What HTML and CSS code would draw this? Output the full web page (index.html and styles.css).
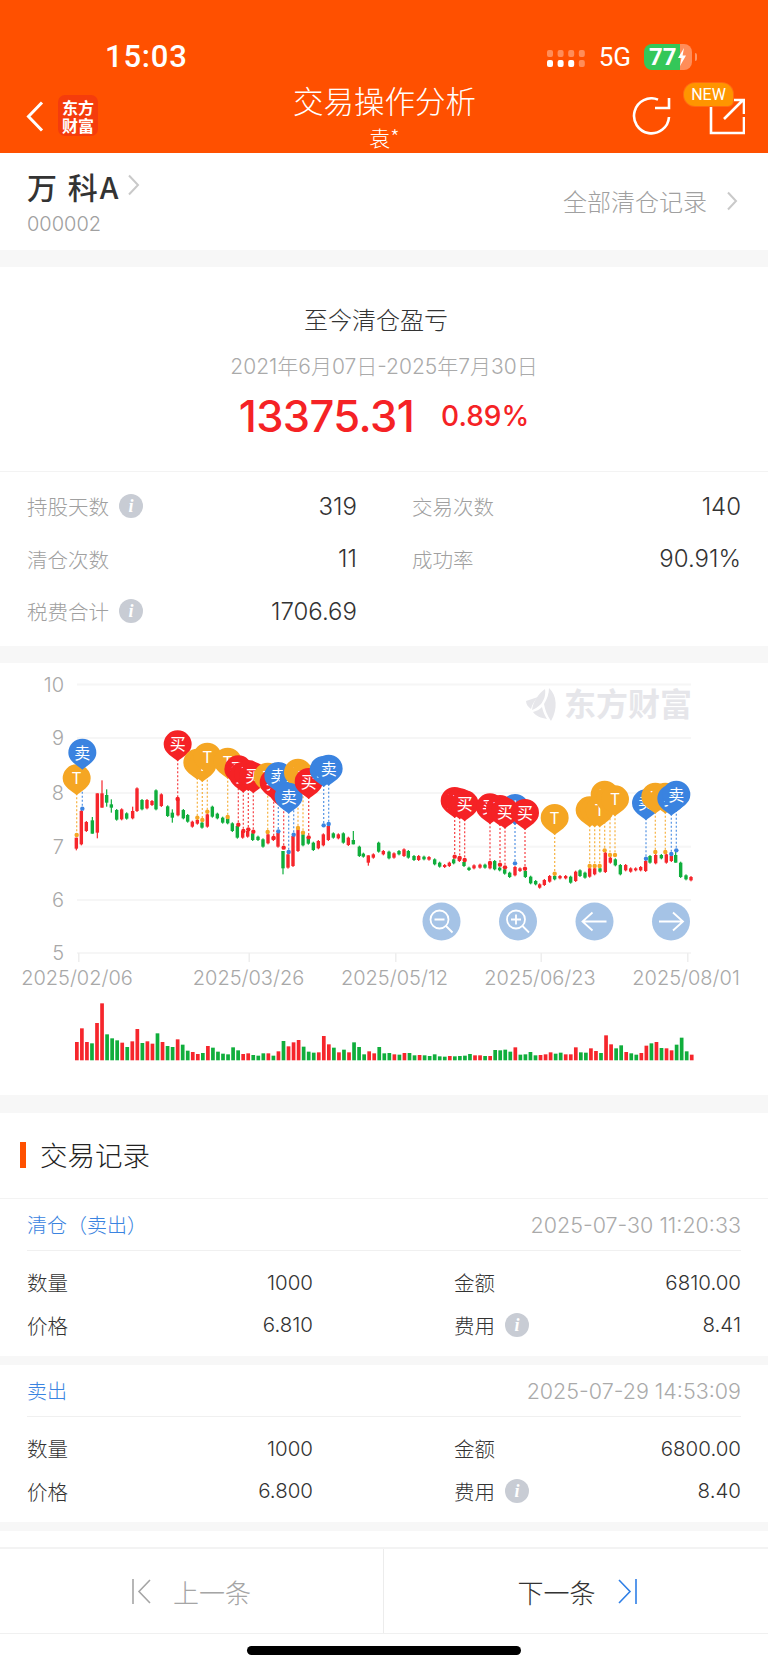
FILE: index.html
```html
<!DOCTYPE html>
<html lang="zh">
<head>
<meta charset="utf-8">
<title>交易操作分析</title>
<link rel="stylesheet" href="styles.css">
</head>
<body>
<div class="page">
  <header class="header">
    <div class="status">
      <span class="time">15:03</span>
      <span class="status-right">
        <svg class="signal" width="38" height="17" viewBox="0 0 38 17">
          <g fill="#fff" opacity=".35"><rect x="0" y="0" width="6" height="7" rx="2"/><rect x="10.6" y="0" width="6" height="7" rx="2"/><rect x="21.2" y="0" width="6" height="7" rx="2"/><rect x="31.8" y="0" width="6" height="7" rx="2"/><rect x="31.8" y="10" width="6" height="7" rx="2"/></g>
          <g fill="#fff"><rect x="0" y="10" width="6" height="7" rx="2"/><rect x="10.6" y="10" width="6" height="7" rx="2"/><rect x="21.2" y="10" width="6" height="7" rx="2"/></g>
        </svg>
        <span class="net">5G</span>
        <span class="battery"><span class="batt-num">77</span>
          <svg class="bolt" width="10" height="18" viewBox="0 0 10 18"><path d="M7 0 1 10h3.4L3 18l6-10.500H5.600z" fill="#fff"/></svg>
        </span>
      </span>
    </div>
    <nav class="nav">
      <div class="nav-left">
        <svg class="back" width="18" height="31" viewBox="0 0 18 31"><path d="M16 1.500 2.500 15.500 16 29.500" fill="none" stroke="#fff" stroke-width="3"/></svg>
        <div class="logo"><span>东方</span><span>财富</span></div>
      </div>
      <div class="nav-title">
        <div class="title">交易操作分析</div>
        <div class="subtitle">袁*</div>
      </div>
      <div class="nav-right">
        <svg class="refresh" width="40" height="38" viewBox="0 0 40 38"><path d="M26 2.600A17.500 17.500 0 1 0 37 20" fill="none" stroke="#fff" stroke-width="2.600"/><path d="M37 1v10H23" fill="none" stroke="#fff" stroke-width="2.600"/></svg>
        <span class="share">
          <svg width="36" height="38" viewBox="0 0 36 38"><path d="M2 8V36H35V20M15 22 34 3M21 3H35V17" fill="none" stroke="#fff" stroke-width="2.600"/></svg>
          <span class="new">NEW</span>
        </span>
      </div>
    </nav>
  </header>

  <section class="stock">
    <div>
      <div class="stock-name">万 科A<svg class="chev-a" width="13" height="22" viewBox="0 0 13 22"><path d="M2 1.500 11 11 2 20.500" fill="none" stroke="#c9c9c9" stroke-width="2"/></svg></div>
      <div class="stock-code">000002</div>
    </div>
    <div class="all-link">全部清仓记录<svg class="chev-b" width="12" height="20" viewBox="0 0 12 20"><path d="M2 1.500 10 10 2 18.500" fill="none" stroke="#c9c9c9" stroke-width="2"/></svg></div>
  </section>

  <section class="summary">
    <div class="sum-title">至今清仓盈亏</div>
    <div class="sum-date">2021年6月07日-2025年7月30日</div>
    <div class="sum-nums"><span class="amount">13375.31</span><span class="pct">0.89%</span></div>
  </section>

  <section class="stats">
    <div class="stat"><span class="lab">持股天数<i class="info">i</i></span><span class="val">319</span></div>
    <div class="stat"><span class="lab">交易次数</span><span class="val">140</span></div>
    <div class="stat"><span class="lab">清仓次数</span><span class="val">11</span></div>
    <div class="stat"><span class="lab">成功率</span><span class="val">90.91%</span></div>
    <div class="stat"><span class="lab">税费合计<i class="info">i</i></span><span class="val">1706.69</span></div>
  </section>

  <section class="chart">
    <svg id="chart" class="chart-svg" width="768" height="432" viewBox="0 662 768 432"></svg>
  </section>

  <section class="records">
    <h2 class="rec-title">交易记录</h2>
    <article class="rec">
      <div class="rec-head"><span class="rec-type">清仓（卖出）</span><span class="rec-time">2025-07-30 11:20:33</span></div>
      <div class="rec-body">
        <div class="kv"><span>数量</span><span>1000</span></div>
        <div class="kv"><span>金额</span><span>6810.00</span></div>
        <div class="kv"><span>价格</span><span>6.810</span></div>
        <div class="kv"><span>费用<i class="info">i</i></span><span>8.41</span></div>
      </div>
    </article>
    <article class="rec">
      <div class="rec-head"><span class="rec-type">卖出</span><span class="rec-time">2025-07-29 14:53:09</span></div>
      <div class="rec-body">
        <div class="kv"><span>数量</span><span>1000</span></div>
        <div class="kv"><span>金额</span><span>6800.00</span></div>
        <div class="kv"><span>价格</span><span>6.800</span></div>
        <div class="kv"><span>费用<i class="info">i</i></span><span>8.40</span></div>
      </div>
    </article>
  </section>

  <div class="band-gap"></div>

  <footer class="pager">
    <div class="pg pg-prev">
      <svg width="19" height="25" viewBox="0 0 19 25"><path d="M1 0V25M18 1 7 12.500 18 24" fill="none" stroke="#a5a5a5" stroke-width="1.600"/></svg>
      <span>上一条</span>
    </div>
    <div class="pg pg-next">
      <span>下一条</span>
      <svg width="19" height="25" viewBox="0 0 19 25"><path d="M18 0V25M1 1 12 12.500 1 24" fill="none" stroke="#2f7fe6" stroke-width="1.600"/></svg>
    </div>
  </footer>
  <div class="home"><span class="home-bar"></span></div>
</div>
<script src="chart.js"></script>
</body>
</html>
```
FILE: styles.css
```css
* { box-sizing: border-box; }
html, body { margin: 0; padding: 0; background: #fff; }
body { font-family: Inter, "Noto Sans CJK SC", sans-serif; color: #333; }
.page { width: 768px; height: 1669px; overflow: hidden; background: #fff; }

.header { height: 153px; background: #ff5000; color: #fff; }
.status { height: 84px; padding: 43px 76px 13px 105px; display: flex; align-items: center; justify-content: space-between; }
.time { font-size: 31px; font-weight: 500; line-height: 28px; font-family: Roboto, sans-serif; letter-spacing: .8px; }
.status-right { display: flex; align-items: center; }
.signal { margin-right: 14px; margin-top: 3px; }
.net { font-size: 26px; line-height: 28px; font-family: Roboto, sans-serif; margin-right: 13px; }
.battery { position: relative; width: 48px; height: 26px; border-radius: 8px; display: flex; align-items: center; padding-left: 5px; background: linear-gradient(90deg, #34c759 75%, rgba(255,255,255,.35) 75%); }
.battery::after { content: ""; position: absolute; left: 51px; top: 9px; width: 2px; height: 8px; border-radius: 0 2px 2px 0; background: rgba(255,255,255,.4); }
.batt-num { font-size: 24px; line-height: 26px; font-weight: 700; font-family: Roboto, sans-serif; }
.bolt { margin-left: 0; flex: none; }

.nav { height: 69px; display: grid; grid-template-columns: 1fr auto 1fr; padding: 0 23px 0 26px; }
.nav-left { display: flex; align-items: flex-start; padding-top: 17px; }
.back { margin-right: 14px; }
.logo { width: 40px; height: 41px; margin-top: -6px; margin-left: 0; border-radius: 7px; background: #f53c0c; font-size: 16px; line-height: 18px; font-weight: 700; font-family: "Noto Sans CJK SC", sans-serif; display: flex; flex-direction: column; align-items: center; justify-content: center; }
.logo span { display: block; }
.nav-title { text-align: center; width: 184px; margin-left: -2px; }
.title { font-size: 30.500px; line-height: 32px; margin-top: 0; font-family: "Noto Sans CJK SC", sans-serif; font-weight: 300; white-space: nowrap; }
.subtitle { font-size: 21px; line-height: 22px; margin-top: 10px; font-family: "Noto Sans CJK SC", sans-serif; font-weight: 300; }
.nav-right { display: flex; justify-content: flex-end; align-items: flex-start; padding-top: 13px; }
.refresh { margin-right: 37px; }
.share { position: relative; display: block; width: 36px; height: 38px; }
.new { position: absolute; left: -25px; top: -14px; width: 49px; height: 23px; background: #ff9500; border-radius: 11px 11px 5px 11px; font-size: 16px; line-height: 23px; text-align: center; font-family: Roboto, sans-serif; box-shadow: 0 0 0 1px #ff6a10; }

.stock { height: 97px; display: flex; justify-content: space-between; align-items: flex-start; padding: 14px 30px 0 27px; }
.stock-name { font-size: 30px; line-height: 38px; font-weight: 500; display: flex; align-items: center; white-space: nowrap; font-family: "Noto Sans CJK SC", sans-serif; color: #333; letter-spacing: 2px; }
.chev-a { margin-left: 7px; margin-top: -3px; }
.stock-code { font-size: 20px; line-height: 24px; color: #a0a0a0; margin-top: 7px; font-weight: 300; }
.all-link { font-size: 24px; line-height: 32px; color: #a0a0a0; display: flex; align-items: center; margin-top: 18px; font-weight: 300; font-family: "Noto Sans CJK SC", sans-serif; }
.chev-b { margin-left: 19px; }

.summary { height: 222px; margin-top: 0; border-top: 17px solid #f7f7f7; border-bottom: 1px solid #f3f3f3; text-align: center; padding-top: 34px; }
.sum-title { font-size: 24px; line-height: 36px; color: #333; font-family: "Noto Sans CJK SC", sans-serif; font-weight: 300; padding-right: 16px; }
.sum-date { font-size: 21px; line-height: 28px; color: #aaa; margin-top: 16px; font-weight: 300; white-space: nowrap; }
.sum-nums { display: flex; justify-content: center; align-items: center; margin-top: 8px; height: 54px; }
.amount { font-size: 43.500px; font-weight: 500; color: #f52225; letter-spacing: -.6px; }
.pct { font-size: 28px; font-weight: 500; color: #f52225; margin-left: 27px; }

.stats { height: 191px; padding: 8px 27px 0 27px; display: grid; grid-template-columns: 330px 329px; column-gap: 55px; grid-auto-rows: 52.500px; border-bottom: 17px solid #f7f7f7; }
.stat { display: flex; justify-content: space-between; align-items: center; }
.lab { font-size: 20.500px; color: #a0a0a0; display: flex; align-items: center; font-family: "Noto Sans CJK SC", sans-serif; font-weight: 300; }
.val { font-size: 24px; color: #333; font-weight: 300; }
.info { display: inline-block; width: 24px; height: 24px; border-radius: 50%; background: #c8ccd4; color: #fff; font: italic 700 18px/24px "Liberation Serif", serif; text-align: center; margin-left: 10px; }

.chart { height: 432px; }
.chart-svg { display: block; }
.tx { font-size: 20px; fill: #a8a8a8; font-weight: 300; }
.mark { font-size: 16px; fill: #fff; font-family: "Noto Sans CJK SC", sans-serif; text-anchor: middle; }
.wm { font-size: 32px; font-weight: 700; fill: #e6e6ea; font-family: "Noto Sans CJK SC", sans-serif; }

.records { border-top: 18px solid #f7f7f7; }
.rec-title { margin: 0; height: 86px; border-bottom: 1px solid #f3f3f3; font-size: 27.500px; line-height: 82px; font-weight: 300; padding-left: 40px; position: relative; font-family: "Noto Sans CJK SC", sans-serif; color: #222; }
.rec-title::before { content: ""; position: absolute; left: 20px; top: 29px; width: 6px; height: 26px; background: #ff5000; }
.rec { border-bottom: 9px solid #f7f7f7; padding: 0 27px 0 27px; height: 166px; }
.rec-head { height: 52px; display: flex; justify-content: space-between; align-items: center; border-bottom: 1px solid #f0f0f0; }
.rec-type { font-size: 20px; color: #3a83e0; font-family: "Noto Sans CJK SC", sans-serif; font-weight: 300; }
.rec-time { font-size: 21.500px; color: #aaa; font-weight: 300; }
.rec-body { display: grid; grid-template-columns: 286px 287px; column-gap: 141px; grid-auto-rows: 42.500px; padding-top: 10px; }
.kv { display: flex; justify-content: space-between; align-items: center; font-size: 20.500px; font-weight: 300; color: #333; }
.kv span:first-child { display: flex; align-items: center; font-family: "Noto Sans CJK SC", sans-serif; font-weight: 300; }

.band-gap { height: 16px; }
.pager { height: 87px; border-top: 2px solid #f3f3f3; border-bottom: 1px solid #f0f0f0; display: flex; }
.pg { width: 50%; display: flex; align-items: center; justify-content: center; font-size: 26px; font-family: "Noto Sans CJK SC", sans-serif; font-weight: 300; }
.pg-prev { color: #a5a5a5; border-right: 1px solid #ececec; }
.pg-prev span { margin-left: 22px; }
.pg-next { color: #333; padding-left: 2px; }
.pg-next svg { margin-left: 22px; }
.home { height: 36px; padding-top: 12px; display: flex; justify-content: center; }
.home-bar { width: 274px; height: 9px; border-radius: 5px; background: #000; }
```
FILE: chart.js
```js
(function () {
  var svg = document.getElementById('chart');
  var R = '#f6262c', G = '#10ae3c', T = '#f5a623', B = '#f52225', S = '#3a83e0';
  var out = '';

  // grid
  [[683.5, '10'], [737, '9'], [792, '8'], [845.7, '7'], [899, '6'], [952, '5']].forEach(function (g) {
    out += '<rect x="77" y="' + (g[0] - 1) + '" width="614" height="2" fill="#f6f6f6"/>';
    out += '<text class="tx" x="64" y="' + (g[0] + 7) + '" text-anchor="end">' + g[1] + '</text>';
  });
  [[78, 77, '2025/02/06'], [248.500, 248.500, '2025/03/26'], [395, 394.500, '2025/05/12'], [540.500, 540, '2025/06/23'], [687, 686, '2025/08/01']].forEach(function (t) {
    out += '<rect x="' + t[0] + '" y="952" width="1.500" height="9" fill="#eee"/>';
    out += '<text class="tx" x="' + t[1] + '" y="984" text-anchor="middle">' + t[2] + '</text>';
  });

  // watermark
  out += '<g fill="#e6e6ea"><path d="M549 687C557 694 558 708 551 720 547 714 545 709 544 703 547 698 549 693 549 687Z"/><path d="M545 688C546 694 544 699 541 703 538 706 535 708 532 709 533 701 538 693 545 688Z"/><path d="M526 700 538 696C534 700 532 704 531 708 528 706 526 703 526 700Z"/><path d="M533 711C537 710 540 708 542 706 543 711 545 715 547 718 541 717 536 715 533 711Z"/></g>';
  out += '<text class="wm" x="564" y="715">东方财富</text>';

  // candles: x, colour, top, bottom, wick top, wick bottom (zoom units, 3 per px)
  var c1 = [[229,R,530,563,530,568],[244,R,450,550],[259,R,483,510],[277,G,478,518,468,518],[292,R,397,515,397,532],[306,R,397,440,358,440],[320,G,402,425,385,437],[334,G,430,440,415,455],[350,G,447,476],[365,R,445,475],[380,G,457,473],[398,R,450,472,437,475],[411,R,382,450],[426,G,417,445],[441,R,417,442],[456,R,420,432],[468,G,388,445],[484,R,400,435],[503,G,436,465],[517,G,455,470,445,485],[534,R,415,463],[550,G,447,472],[563,G,462,482],[577,R,482,497],[592,R,477,488],[606,G,485,500],[622,R,460,497],[637,G,437,467],[652,G,458,472],[668,G,470,485],[683,G,472,487],[697,G,487,510],[712,G,495,530],[728,R,510,530],[743,R,510,527],[758,G,517,537],[774,G,527,537],[789,G,535,557],[804,R,520,547],[820,R,527,537],[834,R,515,557],[849,G,570,622,570,640],[864,R,580,620],[879,R,525,615],[894,R,505,570],[909,G,520,553],[925,G,530,548],[940,G,545,567],[955,R,540,562],[970,R,520,553],[985,R,495,537],[1000,G,517,530],[1015,R,520,532],[1030,G,517,545],[1045,R,530,552],[1060,G,537,550,510,550],[1078,G,557,585],[1090,G,578,587],[1105,R,583,605,583,614],[1120,R,580,590],[1136,G,545,572],[1150,R,570,580]];
  var c2 = [[15,G,572,592],[30,R,577,590],[45,G,570,580],[60,R,565,585],[73,G,570,590],[90,G,585,597],[104,R,585,597],[120,G,587,595],[135,R,588,596],[152,G,595,610],[167,G,605,617],[182,R,612,618],[196,R,605,615],[209,G,595,607],[226,R,590,600],[240,G,603,615],[255,G,620,627],[270,R,613,622],[288,R,611,620],[303,G,611,620],[318,R,605,622],[332,G,600,625],[347,G,620,628],[362,G,625,638],[377,G,635,648],[393,R,618,643],[408,R,622,630],[424,G,630,648],[440,G,647,667],[455,G,660,670],[467,R,670,680],[481,R,657,672],[497,R,645,662],[512,G,645,655],[528,R,645,652],[545,R,645,652],[560,G,647,665],[575,R,632,660],[588,G,628,645],[603,G,635,650],[617,R,622,647],[632,R,622,640],[648,G,622,632],[664,R,575,633],[679,R,590,605],[694,G,595,613],[709,G,612,640],[725,R,612,628],[740,R,622,632],[755,R,622,628],[770,R,618,628],[785,R,600,630],[798,G,585,605],[815,R,582,607],[832,G,582,592],[847,R,580,605],[862,R,585,600],[875,G,582,605,570,605],[890,G,605,648],[906,G,643,655],[921,R,648,658]];
  function candle(ox, d) {
    var x = ox + d[0] / 3, t = 660 + d[2] / 3, b = 660 + d[3] / 3;
    var wt = 660 + (d[4] === undefined ? d[2] - 3 : d[4]) / 3, wb = 660 + (d[5] === undefined ? d[3] + 3 : d[5]) / 3;
    out += '<rect x="' + (x - .6) + '" y="' + wt + '" width="1.200" height="' + (wb - wt) + '" fill="' + d[1] + '"/>';
    out += '<rect x="' + (x - 1.700) + '" y="' + t + '" width="3.400" height="' + (b - t) + '" fill="' + d[1] + '"/>';
  }
  c1.forEach(function (d) { candle(0, d); });
  c2.forEach(function (d) { candle(384, d); });

  // volume
  var tops = 'r363 r322 r363 g367 r306 r247 g340 g352 g358 r365 g378 r361 r324 g366 r361 r368 g337 r363 g375 g378 r355 g371 g389 r393 r399 g396 r375 g380 g392 g398 g400 g379 g388 r399 r397 g402 g404 g397 r397 g404 r391 g360 r376 r364 r357 g377 g392 g395 r394 r345 r370 g380 r394 g386 r394 g364 g378 g400 r391 r397 g378 g397 g396 r400 g401 r396 g396 g403 r402 g403 g405 g400 g406 g407 r405 g406 g405 g404 g399 r403 r403 g405 r405 g387 g388 g386 g392 r379 g401 g400 g393 g403 r402 r400 r394 g398 g395 r400 r400 r379 g394 g395 r382 r390 g396 r343 r370 g382 g373 r393 g397 g401 r396 r374 g367 r363 g381 r382 r388 g371 g350 g391 r401'.split(' ');
  tops.forEach(function (v, i) {
    var y = 920 + (+v.slice(1)) / 3;
    out += '<rect x="' + (75 + i * 5.040) + '" y="' + y + '" width="3.700" height="' + (1059.300 - y) + '" fill="' + (v[0] === 'r' ? R : G) + '"/>';
  });

  // balloons: kind, centre x, centre y, dot x, dot y (px after conversion)
  var z = { T: [T, 'T'], M: [B, '买'], S: [S, '卖'] };
  function pin(ox, k, x, cy, dot) {
    var px = ox + x / 3, cyy = 660 + cy / 3, dy = 660 + dot / 3, col = z[k][0];
    return { px: px, cy: cyy, dy: dy, col: col, label: z[k][1] };
  }
  var pins = [
    pin(0,'T',230,352,522), pin(0,'S',247,275,443), pin(0,'M',533,250,414),
    pin(0,'T',592,305,470), pin(0,'T',607,312,477), pin(0,'T',622,287,452), pin(0,'T',683,302,468),
    pin(0,'M',715,325,491), pin(0,'M',730,344,510), pin(0,'M',745,339,505), pin(0,'M',760,346,512),
    pin(0,'T',803,347,513), pin(0,'M',821,365,531), pin(0,'M',851,394,560), pin(0,'S',835,345,511), pin(0,'S',881,355,521),
    pin(0,'T',894,335,501), pin(0,'T',909,349,515), pin(0,'S',866,407,573), pin(0,'M',926,363,529),
    pin(0,'S',971,327,493), pin(0,'S',986,323,489),
    pin(384,'M',212,420,587), pin(384,'M',227,424,591), pin(384,'M',242,430,597),
    pin(384,'M',318,439,606), pin(384,'S',393,441,607), pin(384,'M',348,444,611), pin(384,'M',363,452,619), pin(384,'M',423,456,623),
    pin(384,'T',512,471,638),
    pin(384,'T',617,448,615), pin(384,'T',632,448,615), pin(384,'T',662,401,568), pin(384,'T',647,448,615), pin(384,'T',678,415,582), pin(384,'T',693,415,582),
    pin(384,'S',786,427,593), pin(384,'T',814,407,573), pin(384,'T',844,407,573), pin(384,'S',862,413,579), pin(384,'S',877,401,568)
  ];
  pins.forEach(function (p) {
    out += '<line x1="' + p.px + '" x2="' + p.px + '" y1="' + (p.cy + 15) + '" y2="' + p.dy + '" stroke="' + p.col + '" stroke-opacity=".8" stroke-width="1.300" stroke-dasharray="2 2"/>';
    out += '<circle cx="' + p.px + '" cy="' + p.dy + '" r="2.200" fill="' + p.col + '"/>';
  });
  pins.forEach(function (p) {
    var x = p.px, y = p.cy;
    out += '<path d="M' + x + ' ' + (y + 17) + 'C' + (x - 4) + ' ' + (y + 13) + ' ' + (x - 14) + ' ' + (y + 9) + ' ' + (x - 14) + ' ' + y + 'A14 14 0 1 1 ' + (x + 14) + ' ' + y + 'C' + (x + 14) + ' ' + (y + 9) + ' ' + (x + 4) + ' ' + (y + 13) + ' ' + x + ' ' + (y + 17) + 'Z" fill="' + p.col + '"/>';
    out += '<text class="mark" x="' + x + '" y="' + (y + 6) + '">' + p.label + '</text>';
  });

  // control buttons
  var icons = [
    '<circle cx="-2" cy="-2" r="9"/><path d="M-7-2h10M4.500 4.500 11 11"/>',
    '<circle cx="-2" cy="-2" r="9"/><path d="M-7-2h10M-2-7V3M4.500 4.500 11 11"/>',
    '<path d="M12 0H-12M-2-9-12 0-2 9"/>',
    '<path d="M-12 0H12M2-9 12 0 2 9"/>'
  ];
  [441.500, 518, 594.500, 671].forEach(function (x, i) {
    out += '<circle cx="' + x + '" cy="920.500" r="19" fill="#a5c3e6"/>';
    out += '<g transform="translate(' + x + ' 920.500)" fill="none" stroke="#fff" stroke-width="1.800">' + icons[i] + '</g>';
  });

  svg.innerHTML = out;
})();
```
